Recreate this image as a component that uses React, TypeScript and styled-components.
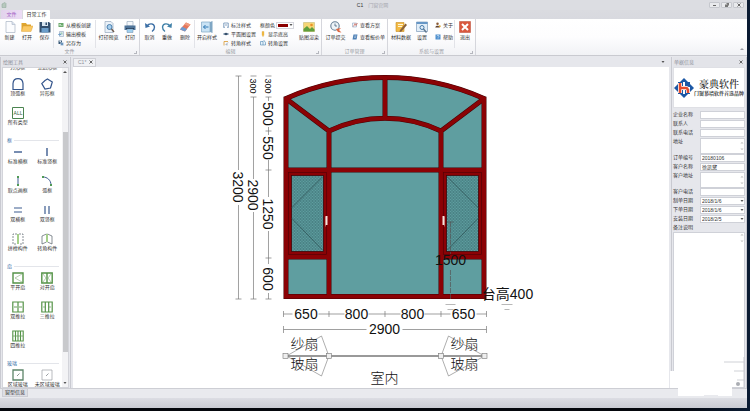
import React from "react";
import styled, { createGlobalStyle } from "styled-components";

const GlobalStyle = createGlobalStyle`
  * { box-sizing: border-box; }
  html, body { margin: 0; padding: 0; background: #05070c; }
  body, button, input, select, textarea {
    font-family: "Liberation Sans", "Noto Sans CJK SC", sans-serif;
    font-size: 5px;
    line-height: 7px;
    color: #333;
  }
  button, input, select, textarea { margin: 0; padding: 0; border: 0; border-radius: 0; background: none; appearance: none; outline: none; }
`;

/* ---------- shell ---------- */
const Desktop = styled.div`
  height: 100vh;
  padding: 0 3px 3px 0;
  background: linear-gradient(90deg, #05070c 90%, #0a1b33);
  overflow: hidden;
`;
const Shell = styled.div`
  position: relative;
  height: 100%;
  display: flex;
  flex-direction: column;
  background: #e6e7ec;
`;
const TitleBar = styled.header`
  display: grid;
  grid-template-columns: 1fr auto 1fr;
  align-items: center;
  height: 10px;
  padding: 0 3px 0 1px;
  background: #dcdde2;
`;
const Title = styled.h1`
  display: flex;
  gap: 5px;
  margin: 0;
  font-size: 5px;
  line-height: 8px;
  font-weight: 400;
  color: #a6a8b0;
`;
const Strong = styled.span`
  color: #333;
`;
const WindowButtons = styled.div`
  justify-self: end;
  display: flex;
  gap: 1px;
`;
const WindowButton = styled.button`
  display: flex;
  align-items: center;
  justify-content: center;
  width: 11px;
  height: 6px;
  border: 1px solid #c6c8ce;
  border-radius: 1px;
  background: #e9eaed;
`;
const TabRow = styled.nav`
  display: flex;
  height: 9px;
  padding-left: 1px;
  gap: 1px;
  background: linear-gradient(#dadbe0, #d8d9df);
`;
const RibbonTab = styled.button<{ $active?: boolean }>`
  display: flex;
  align-items: center;
  justify-content: center;
  gap: 1px;
  width: ${(p) => (p.$active ? 27 : 21)}px;
  border-radius: 1px 1px 0 0;
  color: ${(p) => (p.$active ? "#222" : "#a35fc4")};
  background: ${(p) => (p.$active ? "#fff" : "linear-gradient(90deg, #e2d3ec, #ecdcf5)")};
`;

/* ---------- ribbon ---------- */
const RibbonBar = styled.div`
  display: flex;
  height: 37px;
  background: linear-gradient(#fff, #fdfdfe 50%, #f1f2f5);
  border-bottom: 1px solid #c9cad0;
`;
const Group = styled.section<{ $w: number }>`
  display: flex;
  flex-direction: column;
  flex: 0 0 ${(p) => p.$w}px;
  border-right: 1px solid #d5d6dc;
`;
const GroupBody = styled.div`
  display: flex;
  flex: 1;
  padding: 1px 0 0 1px;
`;
const GroupName = styled.div`
  position: relative;
  height: 7px;
  text-align: center;
  color: #9a9ca4;
  &::after {
    content: "";
    position: absolute;
    right: 2px;
    bottom: 1px;
    width: 2px;
    height: 2px;
    border: solid #b5b7be;
    border-width: 0 1px 1px 0;
  }
`;
const BigButton = styled.button<{ $w: number }>`
  display: flex;
  flex-direction: column;
  align-items: center;
  gap: 1px;
  flex: 0 0 ${(p) => p.$w}px;
  padding-top: 1px;
  white-space: nowrap;
`;
const List = styled.div<{ $w: number; $rule?: boolean; $gap?: number }>`
  display: flex;
  flex-direction: column;
  gap: ${(p) => p.$gap ?? 1}px;
  flex: 0 0 ${(p) => p.$w}px;
  padding: 1px 0 0 4px;
  border-left: ${(p) => (p.$rule ? "1px solid #e2e3e8" : "0")};
`;
const SmallButton = styled.button`
  display: flex;
  align-items: center;
  gap: 2px;
  height: 8px;
  white-space: nowrap;
`;
const Rule = styled.div`
  flex: 0 0 1px;
  background: #e2e3e8;
`;
const ColorLabel = styled.label`
  display: flex;
  align-items: center;
  gap: 1px;
  height: 8px;
  white-space: nowrap;
`;
const ColorSelect = styled.select`
  width: 18px;
  height: 7px;
  border: 1px solid #d5d6dc;
  color: transparent;
  background: linear-gradient(90deg, #8b0000 10px, transparent 10px) 1px 1px / 16px 3px no-repeat;
`;
const Picker = styled.span`
  display: flex;
  align-items: center;
  svg { margin-left: -5px; pointer-events: none; }
`;
const RibbonFold = styled.button`
  margin-left: auto;
  align-self: flex-end;
  padding: 0 3px 2px;
`;

/* ---------- work area ---------- */
const Work = styled.main`
  display: flex;
  flex: 1;
  min-height: 0;
  padding-top: 1px;
`;
const Dock = styled.aside<{ $w: number }>`
  display: flex;
  flex-direction: column;
  flex: 0 0 ${(p) => p.$w}px;
  min-height: 0;
  padding: 0 1px;
  border: solid #c9cad1;
  border-width: 0 1px;
`;
const DockTitle = styled.h2`
  display: flex;
  align-items: center;
  justify-content: space-between;
  flex: 0 0 10px;
  margin: 0;
  padding: 0 2px 0 1px;
  font-size: 5px;
  font-weight: 400;
  color: #8f929b;
  background: #e3e4e9;
`;
const ToolBox = styled.div`
  display: flex;
  flex: 1;
  min-height: 0;
  border: 1px solid #d3d4da;
  background: #fff;
`;
const ToolList = styled.div`
  flex: 1;
  overflow: hidden;
`;
const ToolGrid = styled.div<{ $cut?: boolean }>`
  display: grid;
  grid-template-columns: 1fr 1fr;
  align-items: end;
  height: ${(p) => (p.$cut ? "8px" : "auto")};
  overflow: hidden;
`;
const CutLabel = styled.span`
  align-self: start;
  margin-top: -5px;
  text-align: center;
  line-height: 8px;
`;
const Tool = styled.button`
  display: flex;
  flex-direction: column;
  align-items: center;
  height: 29px;
  padding-top: 2px;
  white-space: nowrap;
`;
const ToolHeading = styled.h3`
  display: flex;
  align-items: center;
  gap: 2px;
  height: 10px;
  margin: 0;
  padding: 2px 3px 0 4px;
  font-size: 5px;
  font-weight: 400;
  color: #3a6ea8;
  &::after { content: ""; flex: 1; height: 1px; background: #e3e5ea; }
`;
const ScrollBar = styled.div`
  display: flex;
  flex-direction: column;
  align-items: center;
  flex: 0 0 6px;
  padding: 2px 0;
  background: #f3f3f5;
`;
const Thumb = styled.div`
  flex: 0 1 220px;
  width: 5px;
  margin: auto 0 29px;
  background: #c8c9cc;
`;
const Center = styled.section`
  display: flex;
  flex-direction: column;
  flex: 1;
  min-width: 0;
  margin: 0 2px;
`;
const Documents = styled.div`
  display: flex;
  align-items: center;
  justify-content: space-between;
  flex: 0 0 10px;
  padding-right: 4px;
`;
const DocTab = styled.button`
  display: flex;
  align-items: center;
  justify-content: space-between;
  width: 23px;
  height: 9px;
  padding: 0 2px 0 4px;
  border: 1px solid #cfd0d6;
  color: #8f929b;
  background: #f0f1f4;
`;
const Drawing = styled.svg`
  flex: 1;
  min-height: 0;
  width: 100%;
  background: #fff;
  font-family: "Liberation Sans", "Noto Sans CJK SC", sans-serif;
`;

/* ---------- order form ---------- */
const Brand = styled.div`
  display: flex;
  align-items: center;
  justify-content: center;
  flex: 0 0 41px;
  border: 1px solid #dfe0e5;
  background: #fff;
`;
const BrandText = styled.div`
  display: flex;
  flex-direction: column;
  align-items: center;
  white-space: nowrap;
  font-family: "Liberation Serif", "Noto Serif CJK SC", "Noto Sans CJK SC", serif;
`;
const BrandName = styled.strong`
  font-size: 10px;
  line-height: 12px;
  font-weight: 500;
  color: #222;
`;
const Slogan = styled.span`
  font-size: 5px;
  line-height: 6px;
  font-weight: 700;
`;
const Form = styled.form`
  display: flex;
  flex-direction: column;
  flex: 1;
  min-height: 0;
  padding-top: 3px;
`;
const Field = styled.label<{ $tall?: boolean }>`
  display: grid;
  grid-template-columns: 27px 1fr;
  height: ${(p) => (p.$tall ? 16 : 9)}px;
  padding-bottom: ${(p) => (p.$tall ? 3 : 1)}px;
  white-space: nowrap;
`;
const Control = styled.span`
  display: flex;
  align-items: center;
  min-width: 0;
  border: 1px solid #cfd1d8;
  background: #fff;
  svg { flex: none; }
`;
const TextBox = styled.input`
  flex: 1;
  min-width: 0;
  height: 6px;
  padding-left: 1px;
  line-height: 6px;
`;
const DateBox = styled(TextBox).attrs({ as: "select" })``;
const Area = styled.textarea`
  flex: 1;
  min-width: 0;
  height: 100%;
  resize: none;
  overflow: hidden;
`;
const Remark = styled.label`
  display: flex;
  flex-direction: column;
  flex: 1;
  min-height: 0;
  gap: 1px;
  ${Control} { flex: 1; align-items: flex-start; }
`;

/* ---------- bottom ---------- */
const InfoStrip = styled.div`
  flex: 0 0 10px;
  padding-left: 2px;
  background: #e9eaee;
  border-top: 1px solid #cdced4;
`;
const InfoTab = styled.button`
  height: 8px;
  padding: 0 2px;
  border: 1px solid #cdced4;
  border-top: 0;
  background: #dddfe5;
`;
const StatusBar = styled.footer`
  flex: 0 0 10px;
  background: linear-gradient(#dcdde3, #c9cbd2);
`;
const Patch = styled.svg`
  position: absolute;
  right: 0;
  bottom: 9px;
  width: 77px;
  height: 42px;
  pointer-events: none;
`;

/* ---------- small glyphs ---------- */
const Glyph = ({ size = 12, children }: { size?: number; children: React.ReactNode }) => (
  <svg width={size} height={size} viewBox="0 0 12 12" fill="none" aria-hidden="true">
    {children}
  </svg>
);
const Arrow = ({ up = false, color = "#555" }: { up?: boolean; color?: string }) => (
  <svg width="4" height="4" viewBox="0 0 4 4" aria-hidden="true">
    <path d={up ? "M0 3L2 1L4 3Z" : "M.5 1H3.500L2 3Z"} fill={color} />
  </svg>
);
const Spin = () => (
  <svg width="4" height="10" viewBox="0 0 4 10" aria-hidden="true">
    <path d="M1 3L2 1L3 3M1 7L2 9L3 7" stroke="#bbb" fill="none" strokeWidth=".6" />
  </svg>
);
const Cross = () => (
  <svg width="4" height="4" viewBox="0 0 4 4" aria-hidden="true">
    <path d="M.5 .5L3.500 3.500M3.500 .5L.5 3.500" stroke="#666" />
  </svg>
);

const art: Record<string, React.ReactNode> = {
  new: <><path d="M2 .5H8L11 3.500V11.500H2Z" fill="#fbfcfe" stroke="#a9b4c4" strokeWidth=".7" /><path d="M8 .5V3.500H11" fill="#d9e2ee" stroke="#a9b4c4" strokeWidth=".6" /></>,
  open: <><path d="M.5 2H5L6 3.500H10V10H.5Z" fill="#dfa52f" /><path d="M2 5H12L10 10.500H.5Z" fill="#fbc964" stroke="#d79b2c" strokeWidth=".4" /></>,
  save: <><path d="M.5 1H10L11.500 2.500V11.500H.5Z" fill="#34506f" /><path d="M3 1H9V5H3Z" fill="#d8e6f2" /><path d="M6.500 1.500H8V4H6.500Z" fill="#34506f" /><path d="M2.500 7H9.500V11.500H2.500Z" fill="#6b9ecb" /></>,
  tplNew: <><path d="M1 2H11V10H1Z" fill="#6aa86b" /><path d="M2.500 4H6V5.500H2.500ZM2.500 7H9V8H2.500Z" fill="#e8f5e8" /></>,
  tplOut: <><path d="M3 1H11V11H3Z" fill="#e5eef7" stroke="#8299b5" /><path d="M5 4H9M5 6H9" stroke="#4e9c62" /><path d="M0 7H5M3 5L5.500 7L3 9" stroke="#2d76b8" /></>,
  saveAs: <><path d="M1 1H8V8H1Z" fill="#385876" /><path d="M3 1H6V4H3Z" fill="#dbe8f3" /><path d="M5 5H11V11H5Z" fill="#6a95bd" stroke="#fff" strokeWidth=".6" /></>,
  preview: <><path d="M2 .5H8L10 2.500V11.500H2Z" fill="#eaf1f8" stroke="#96a9be" strokeWidth=".7" /><circle cx="6.500" cy="6" r="2.500" fill="#a9d0ed" stroke="#4b7fae" /><path d="M8.500 8L11 11" stroke="#6e5a4d" strokeWidth="1.400" /></>,
  print: <><path d="M3 .5H9V5H3Z" fill="#f5f8fb" stroke="#8fa2b8" strokeWidth=".6" /><path d="M.5 4.500H11.500V9H.5Z" fill="#4f7499" /><path d="M2 7H10V8H2Z" fill="#233b57" /><path d="M3 8H9V11.500H3Z" fill="#9fd0ef" stroke="#6d8aa8" strokeWidth=".5" /></>,
  undo: <><path d="M3 5C5 2 10 2 10.500 6C10.500 8 9.500 9.500 8 10.500" stroke="#3b6ea5" strokeWidth="1.400" /><path d="M1 2L1.500 7L6 5.500Z" fill="#3b6ea5" /></>,
  redo: <><path d="M9 5C7 2 2 2 1.500 6C1.500 8 2.500 9.500 4 10.500" stroke="#3f80a8" strokeWidth="1.400" /><path d="M11 2L10.500 7L6 5.500Z" fill="#3f80a8" /></>,
  erase: <><path d="M7 1.500L11.500 3.500L6 10.500L1 8.500Z" fill="#e5775c" /><path d="M3.200 5.800L8 8L6 10.500L1 8.500Z" fill="#6f9bd0" /><path d="M7 1.500L11.500 3.500L10 5.300L5.200 3.500Z" fill="#ef9c80" /></>,
  opening: <><path d="M.5 1H9V11H.5Z" fill="#c9e3f5" stroke="#7fa6c4" strokeWidth=".7" /><path d="M9 1L11.500 0V12L9 11Z" fill="#7fa6c4" /><path d="M7.500 6H2.500M4.500 4L2.500 6L4.500 8" stroke="#2f79b5" /></>,
  dimension: <path d="M1.500 11V2H10.500V11M3.500 6H8.500M1 10.500H4M8 10.500H11" stroke="#3d6b9e" strokeWidth="1.200" />,
  plan: <><path d="M1 4H11V8H1Z" fill="#7a90a8" /><circle cx="6" cy="6" r="2.500" fill="#38506c" /></>,
  corner: <><path d="M2 11V3H10" stroke="#d9982d" strokeWidth="1.600" /><path d="M5 10L10 5M8 8V11" stroke="#47698e" /></>,
  sill: <path d="M4 1H8V8L6 11.500L4 8Z" fill="#f3bd44" stroke="#cf8f21" strokeWidth=".5" />,
  turn: <path d="M1 3H6L8 1L11 5V10H1ZM6 3V10" fill="#e6f2fb" stroke="#3f7cab" strokeWidth="1.100" />,
  render: <><path d="M.5 1.500H11.500V10.500H.5Z" fill="#f6d675" stroke="#b9b06e" strokeWidth=".5" /><path d="M.5 10.500V8L4 5L7 8L9 6L11.500 8.500V10.500Z" fill="#5f9f3b" /><circle cx="8.500" cy="4" r="1.300" fill="#ea9028" /></>,
  submit: <><circle cx="5" cy="5" r="4.200" fill="#eef4f8" stroke="#667f95" strokeWidth="1.100" /><path d="M5 2.500V5H7" stroke="#44637e" strokeWidth=".8" /><path d="M6 8L11 7L9 9L11.500 11.500L8 11Z" fill="#df6841" /></>,
  scheme: <><path d="M1 2H9V10H1Z" fill="#f1f5fa" stroke="#7c96b4" /><path d="M3 9L6 3L8 7L11 2" stroke="#d0503b" strokeWidth="1.200" /></>,
  quote: <><path d="M3 1H11L9 11H1Z" fill="#4c7fb5" /><path d="M5 4H9M4 6.500H8" stroke="#fff" /></>,
  material: <><path d="M1 1.500H9V10.500H1Z" fill="#f3bb45" stroke="#c88d25" strokeWidth=".6" /><path d="M3 3.500H8M3 5.500H7" stroke="#fff5da" /><path d="M10.500 2.500L12 4L6.500 10.500L4.500 11L5 9Z" fill="#8c6239" /></>,
  settings: <><path d="M.5 1H11.500V10.500H.5Z" fill="#e2eef8" stroke="#7e9cba" strokeWidth=".7" /><path d="M.5 1H11.500V3H.5Z" fill="#6797c6" /><circle cx="6" cy="6.500" r="2" stroke="#487cab" /><path d="M7.500 8L10.500 11.500" stroke="#60788f" strokeWidth="1.400" /></>,
  about: <><circle cx="5" cy="3.500" r="2.500" fill="#8b5a33" /><path d="M.5 11C1 6 9 6 9.500 11Z" fill="#60402c" /><circle cx="9.500" cy="8.500" r="2" fill="#d9a331" /></>,
  help: <><path d="M1 1H11V11H1Z" fill="#4d8fce" /><path d="M4 4.500C4 2 8 2 8 4.500C8 6 6 6 6 7.500M6 9V10" stroke="#fff" strokeWidth="1.200" /></>,
  exit: <><path d="M.5 .5H11.500V11.500H.5Z" fill="#d9573d" stroke="#b94630" strokeWidth=".5" /><path d="M3 3L9 9M9 3L3 9" stroke="#fff" strokeWidth="2" /></>,
  arcFrame: <path d="M1 11.500V5.500C1.500 -1 10.500 -1 11 5.500V11.500Z" stroke="#34558c" strokeWidth="1.200" />,
  polyFrame: <path d="M6.500 1L11.300 4L9.500 10L4 11L.8 5.500L4 2.500Z" stroke="#34558c" strokeWidth="1.200" />,
  all: <><path d="M.5 .5H11.500V11.500H.5Z" stroke="#4b8450" /><text x="6" y="8" fontSize="5" textAnchor="middle" fill="#2f6036">ALL</text></>,
  hBar: <path d="M2 6H10" stroke="#3d5c90" strokeWidth="1.400" />,
  vBar: <path d="M6 2V10" stroke="#3d5c90" strokeWidth="1.400" />,
  pick: <><path d="M6 2V10" stroke="#3d5c90" /><path d="M5 1H7V3H5ZM5 9H7V11H5Z" fill="#4f9a54" /></>,
  arcBar: <><path d="M2 2C6 2 10 5 10 10" stroke="#3d5c90" /><path d="M1 1H3V3H1ZM9 9H11V11H9Z" fill="#4f9a54" /></>,
  hTwo: <path d="M2 4H10M2 8H10" stroke="#3d5c90" strokeWidth="1.200" />,
  vTwo: <path d="M4 2V10M8 2V10" stroke="#3d5c90" strokeWidth="1.200" />,
  joint: <><path d="M5 1H1V11H5M7 1H11V11H7" stroke="#555e68" strokeWidth=".7" strokeDasharray="2 1" /><path d="M5 1H7V11H5Z" fill="#a5cf8a" /></>,
  cornerPart: <><path d="M1 3L5.500 1V9L1 11ZM11 3L6.500 1V9L11 11Z" stroke="#555e68" strokeWidth=".7" /><path d="M5 1H7V9H5Z" fill="#a5cf8a" /></>,
  casement: <><path d="M1 1H11V11H1Z" stroke="#549347" strokeWidth="1.400" /><path d="M10 2L3 6L10 10" stroke="#83ad79" strokeWidth=".6" /></>,
  doubleCasement: <><path d="M.8 1H11.200V11H.8ZM6 1V11" stroke="#549347" strokeWidth="1.400" /><path d="M2 2L5 6L2 10M10 2L7 6L10 10" stroke="#83ad79" strokeWidth=".6" /></>,
  slide2: <><path d="M.8 1H11.200V11H.8ZM6 1V11" stroke="#549347" strokeWidth="1.200" /><path d="M2 6H5M7 6H10" stroke="#6a9e61" /></>,
  slide3: <><path d="M.8 1H11.200V11H.8ZM4.300 1V11M7.700 1V11" stroke="#549347" strokeWidth="1.200" /><path d="M2 6H4M8 6H10" stroke="#6a9e61" strokeWidth=".7" /></>,
  slide4: <><path d="M.8 1H11.200V11H.8ZM3.500 1V11M6 1V11M8.500 1V11" stroke="#549347" strokeWidth="1.100" /><path d="M1 6H11" stroke="#6a9e61" strokeWidth=".8" /></>,
  glassArea: <><path d="M1 1H11V11H1Z" stroke="#5c8569" strokeWidth="1.300" /><path d="M5 7L7.500 4.500" stroke="#8a9a90" /></>,
  glassAll: <><path d="M1 1H11V11H1Z" stroke="#9b9fa3" strokeWidth=".7" /><path d="M5 7L7.500 4.500" stroke="#9b9fa3" /></>,
};

const Big = ({ w, icon, text }: { w: number; icon: string; text: string }) => (
  <BigButton $w={w}><Glyph>{art[icon]}</Glyph>{text}</BigButton>
);
const Small = ({ icon, text }: { icon: string; text: string }) => (
  <SmallButton><Glyph size={6}>{art[icon]}</Glyph>{text}</SmallButton>
);

const toolSections: { name?: string; tools: [string, string][] }[] = [
  { tools: [["arcFrame", "顶弧框"], ["polyFrame", "异形框"], ["all", "所有类型"]] },
  { name: "框", tools: [["hBar", "标准横框"], ["vBar", "标准竖框"], ["pick", "取点画框"], ["arcBar", "弧框"], ["hTwo", "双横框"], ["vTwo", "双竖框"], ["joint", "拼樘构件"], ["cornerPart", "转角构件"]] },
  { name: "扇", tools: [["casement", "平开扇"], ["doubleCasement", "对开扇"], ["slide2", "双推拉"], ["slide3", "三推拉"], ["slide4", "四推拉"]] },
  { name: "玻璃", tools: [["glassArea", "区域玻璃"], ["glassAll", "未区域玻璃"]] },
];

const fields: { label: string; kind: "text" | "area" | "date"; value?: string }[] = [
  { label: "企业名称", kind: "text" },
  { label: "联系人", kind: "text" },
  { label: "联系电话", kind: "text" },
  { label: "地址", kind: "area" },
  { label: "订单编号", kind: "text", value: "20180106" },
  { label: "客户名称", kind: "text", value: "徐凯黛" },
  { label: "客户地址", kind: "area" },
  { label: "客户电话", kind: "text" },
  { label: "制单日期", kind: "date", value: "2018/1/6" },
  { label: "下单日期", kind: "date", value: "2018/1/6" },
  { label: "安装日期", kind: "date", value: "2018/2/5" },
];

/* ---------- window elevation ---------- */
const Across = ({ x, y, text, size = 14 }: { x: number; y: number; text: string; size?: number }) => (
  <text x={x} y={y} fontSize={size} textAnchor="middle" dominantBaseline="central" fill="#111">{text}</text>
);
const Down = ({ x, y, text, size = 14 }: { x: number; y: number; text: string; size?: number }) => (
  <text transform={`translate(${x} ${y}) rotate(90)`} fontSize={size} textAnchor="middle" dominantBaseline="central" fill="#111">{text}</text>
);

const outline = "M285.500 296.500V98.500A244 244 0 0 1 483.500 98.500V296.500Z";
const bars = "M286 99L328.500 131M483 99L440.500 131M328.500 297V131A129 129 0 0 1 440.500 131V297M384.500 78V118M286 170H483M286 257H328.500M440.500 257H483";

const WindowDrawing = () => (
  <Drawing viewBox="73 67 595 321" role="img" aria-label="C1">
    <defs>
      <pattern id="mesh" width="3" height="3" patternUnits="userSpaceOnUse">
        <path d="M0 0L3 3M3 0L0 3" stroke="#35666b" strokeWidth=".5" />
      </pattern>
    </defs>
    <path d={outline} fill="#5f9ea0" />
    <g fill="none" strokeLinejoin="miter">
      <path d={bars} stroke="#430306" strokeWidth="5" />
      <path d={outline} stroke="#430306" strokeWidth="5" />
      <path d={bars} stroke="#8b0205" strokeWidth="4" />
      <path d={outline} stroke="#8b0205" strokeWidth="4" />
    </g>
    {[{ x: 289, flip: false }, { x: 444, flip: true }].map(({ x, flip }) => (
      <g key={x} fill="none">
        <rect x={x} y="173.500" width="36" height="80" stroke="#8b0205" strokeWidth="4" />
        <rect x={x - 1} y="172.500" width="38" height="82" stroke="#4d0306" strokeWidth=".6" />
        <rect x={x + 2} y="175.500" width="32" height="76" fill="url(#mesh)" stroke="#430306" strokeWidth=".8" />
        <path
          d={flip ? `M${x + 3} 177L${x + 34} 208M${x + 34} 218L${x + 3} 250` : `M${x + 33} 177L${x + 2} 208M${x + 2} 218L${x + 33} 250`}
          stroke="#2c4f52" strokeWidth=".7"
        />
      </g>
    ))}
    <path d="M326 216V225M443 216V225" stroke="#f7e4de" strokeWidth="2" />
    <path d="M325 217V226.500M444 217V226.500" stroke="#c9a49c" strokeWidth=".6" />
    <g stroke="#555" strokeWidth=".7" fill="none">
      <path d="M447 222H453" />
      <path d="M450 222V254M450 270V300" strokeDasharray="5 1" />
      <path d="M445 304.500H455M447 309.500H453M501 304.500H512M504 309.500H509" stroke="#999" />
    </g>
    <Across x={450} y={260} text="1500" />
    <Across x={507} y={294} text="台高400" />

    <g stroke="#777" strokeWidth=".7" fill="none">
      <path d="M238 76V170M238 205V299M235 76H241M235 299H241" />
      <path d="M253 97V179M253 212V299M250 76H256M250 97H256M250 299H256" />
      <path d="M268 97V101M268 127V135M268 160V197M268 231V264M268 293V299M265 76H271M265 97H271M265 131H271M265 170H271M265 258H271M265 299H271" />
      <path d="M283 314H292M318 314H344M368 314H400M424 314H450M476 314H486M283 311V317M328.500 311V317M384.500 311V317M440.500 311V317M486 311V317" />
      <path d="M283 329.500H366M402 329.500H486M283 326V333M486 326V333" />
    </g>
    <Down x={238} y={187} text="3200" />
    <Down x={253} y={195} text="2900" />
    <Down x={253} y={86} text="300" size={9} />
    <Down x={268} y={86} text="300" size={9} />
    <Down x={268} y={114} text="500" />
    <Down x={268} y={148} text="550" />
    <Down x={268} y={214} text="1250" />
    <Down x={268} y={279} text="600" />
    <Across x={305.5} y={314} text="650" />
    <Across x={356} y={314} text="800" />
    <Across x={412} y={314} text="800" />
    <Across x={463} y={314} text="650" />
    <Across x={384} y={329} text="2900" />

    <g fill="none" stroke="#777" strokeWidth=".6">
      <path d="M328 355L321 336L286 356L321 376L328 357M441 355L448 336L484 356L448 376L441 357" />
      <path d="M286 356H484" strokeWidth="1.500" />
      {[285, 328.5, 440.5, 484].map((x) => (
        <rect key={x} x={x - 2.5} y="353.500" width="5" height="5" fill="#eee" />
      ))}
    </g>
    <g fontWeight="300">
      <Across x={304} y={344} text="纱扇" />
      <Across x={304} y={364} text="玻扇" />
      <Across x={464} y={344} text="纱扇" />
      <Across x={464} y={364} text="玻扇" />
      <Across x={384} y={378} text="室内" />
    </g>
  </Drawing>
);

const Ribbon = () => (
  <RibbonBar>
    <Group $w={140}>
      <GroupBody>
        <Big w={17} icon="new" text="新建" />
        <Big w={18} icon="open" text="打开" />
        <Big w={17} icon="save" text="保存" />
        <List $w={42} $rule>
          <Small icon="tplNew" text="从模板创建" />
          <Small icon="tplOut" text="输出模板" />
          <Small icon="saveAs" text="另存为" />
        </List>
        <Rule />
        <Big w={25} icon="preview" text="打印预览" />
        <Big w={18} icon="print" text="打印" />
      </GroupBody>
      <GroupName>文件</GroupName>
    </Group>
    <Group $w={182}>
      <GroupBody>
        <Big w={17} icon="undo" text="取消" />
        <Big w={18} icon="redo" text="重做" />
        <Big w={18} icon="erase" text="删除" />
        <Rule />
        <Big w={24} icon="opening" text="开启样式" />
        <List $w={36}>
          <Small icon="dimension" text="标注样式" />
          <Small icon="plan" text="平面图设置" />
          <Small icon="corner" text="转角样式" />
        </List>
        <List $w={42}>
          <ColorLabel>
            框颜色
            <Picker>
              <ColorSelect defaultValue="red"><option value="red">深红</option></ColorSelect>
              <Arrow />
            </Picker>
          </ColorLabel>
          <Small icon="sill" text="显示底高" />
          <Small icon="turn" text="转角设置" />
        </List>
        <Big w={22} icon="render" text="贴图渲染" />
      </GroupBody>
      <GroupName>编辑</GroupName>
    </Group>
    <Group $w={66}>
      <GroupBody>
        <Big w={25} icon="submit" text="订单提交" />
        <List $w={39} $gap={4}>
          <Small icon="scheme" text="查看方案" />
          <Small icon="quote" text="查看报价单" />
        </List>
      </GroupBody>
      <GroupName>订单管理</GroupName>
    </Group>
    <Group $w={88}>
      <GroupBody>
        <Big w={24} icon="material" text="材料数据" />
        <Big w={18} icon="settings" text="设置" />
        <List $w={23} $gap={4}>
          <Small icon="about" text="关于" />
          <Small icon="help" text="帮助" />
        </List>
        <Rule />
        <Big w={20} icon="exit" text="退出" />
      </GroupBody>
      <GroupName>系统与设置</GroupName>
    </Group>
    <RibbonFold aria-label="折叠功能区"><Arrow up color="#9a9ca4" /></RibbonFold>
  </RibbonBar>
);

const Tools = () => (
  <Dock $w={71}>
    <DockTitle>绘图工具<Cross /></DockTitle>
    <ToolBox>
      <ToolList>
        <ToolGrid $cut>
          <CutLabel>方形框</CutLabel>
          <CutLabel>五边形框</CutLabel>
        </ToolGrid>
        {toolSections.map((section, i) => (
          <React.Fragment key={i}>
            {section.name && <ToolHeading>{section.name}</ToolHeading>}
            <ToolGrid>
              {section.tools.map(([icon, text]) => (
                <Tool key={text}><Glyph>{art[icon]}</Glyph>{text}</Tool>
              ))}
            </ToolGrid>
          </React.Fragment>
        ))}
      </ToolList>
      <ScrollBar><Arrow up /><Thumb /><Arrow /></ScrollBar>
    </ToolBox>
  </Dock>
);

const Order = () => (
  <Dock $w={76}>
    <DockTitle>单据信息<Cross /></DockTitle>
    <Brand>
      <svg width="20" height="20" viewBox="0 0 20 20" aria-hidden="true">
        <path d="M10 0L14 4H6ZM20 10L16 14V6ZM10 20L6 16H14ZM0 10L4 6V14Z" fill="#1d58a5" />
        <path d="M4 4H9V9H4ZM11 4H16V9H11ZM4 11H9V16H4ZM11 11H16V16H11Z" fill="#1d58a5" />
        <path d="M6 5V15M6 10H12C14 10 14 12 14 15" fill="none" stroke="#fff" strokeWidth="4" />
        <path d="M6 5V15M6 10H12C14 10 14 12 14 15" fill="none" stroke="#e64c2c" strokeWidth="2.500" />
      </svg>
      <BrandText>
        <BrandName>豪典软件</BrandName>
        <Slogan>门窗幕墙软件首选品牌</Slogan>
      </BrandText>
    </Brand>
    <Form>
      {fields.map(({ label, kind, value }) => (
        <Field key={label} $tall={kind === "area"}>
          {label}
          <Control>
            {kind === "text" && <TextBox defaultValue={value} />}
            {kind === "area" && <><Area /><Spin /></>}
            {kind === "date" && <><DateBox defaultValue={value}><option>{value}</option></DateBox><Arrow /></>}
          </Control>
        </Field>
      ))}
      <Remark>
        备注说明
        <Control><Area /><Spin /></Control>
      </Remark>
    </Form>
  </Dock>
);

export default function App() {
  return (
    <Desktop>
      <GlobalStyle />
      <Shell>
        <TitleBar>
          <Glyph size={6}><path d="M2 4L8 1L10 3V11H2Z" fill="#b7c8bd" stroke="#8ba696" /></Glyph>
          <Title><Strong>C1</Strong>门窗官网</Title>
          <WindowButtons>
            <WindowButton aria-label="最小化"><svg width="4" height="4" aria-hidden="true"><path d="M0 2H3V3H0Z" fill="#666" /></svg></WindowButton>
            <WindowButton aria-label="还原"><svg width="4" height="4" aria-hidden="true"><path d="M0 1.500H3V4H0ZM1 0H4V3" fill="#777" /></svg></WindowButton>
            <WindowButton aria-label="关闭"><Cross /></WindowButton>
          </WindowButtons>
        </TitleBar>
        <TabRow>
          <RibbonTab>文件</RibbonTab>
          <RibbonTab $active>日常工作</RibbonTab>
        </TabRow>
        <Ribbon />
        <Work>
          <Tools />
          <Center>
            <Documents>
              <DocTab>C1*<Cross /></DocTab>
              <Arrow />
            </Documents>
            <WindowDrawing />
          </Center>
          <Order />
        </Work>
        <InfoStrip><InfoTab>窗型信息</InfoTab></InfoStrip>
        <StatusBar />
        <Patch viewBox="0 0 77 42" aria-hidden="true">
          <path d="M0 14H8V3H74V28H62V39H48V38H34V39H8V31H0Z" fill="#fff" />
          <path d="M54 5H74M64 14H74M67 23H74" stroke="#cfd1d6" />
          <path d="M74 0V30" stroke="#c9cad1" />
          <circle cx="68" cy="27" r="2" fill="#aaadb3" />
        </Patch>
      </Shell>
    </Desktop>
  );
}
